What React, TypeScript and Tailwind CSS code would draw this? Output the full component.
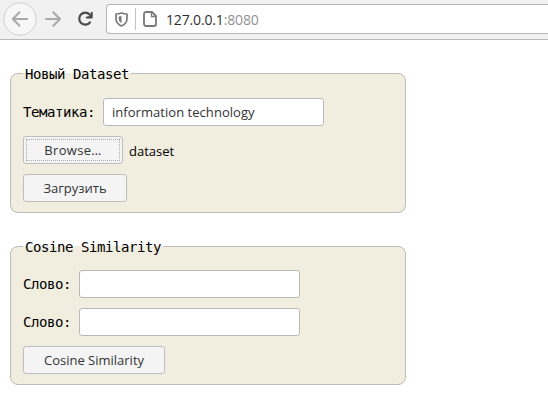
import type { ReactNode } from 'react';

const sans = "font-['Open_Sans','Noto_Sans',sans-serif]";
const mono = "font-['DejaVu_Sans_Mono',monospace] text-[14px] tracking-[-0.43px]";

function BrowserBar() {
  return (
    <header className="flex h-10 items-start border-b border-[#b9b9b9] bg-[#f1f1f1] pl-[3px]">
      <svg className="mt-[2px] shrink-0" width="34" height="34" viewBox="0 0 34 34" fill="none">
        <circle cx="17" cy="17" r="16.3" fill="#f7f7f7" stroke="#cfcfcf" />
        <path d="M24.2 17H10M16.5 10.3L9.8 17l6.7 6.7" stroke="#aaaaaa" strokeWidth="2" strokeLinecap="round" strokeLinejoin="round" />
      </svg>
      <svg className="mt-[11px] ml-2 shrink-0" width="16" height="16" viewBox="0 0 16 16" fill="none">
        <path d="M1 8h14M8.3 1.3L15 8l-6.7 6.7" stroke="#aaaaaa" strokeWidth="2" strokeLinecap="round" strokeLinejoin="round" />
      </svg>
      <svg className="mt-[11px] ml-4 shrink-0" width="17" height="16" viewBox="0 0 17 16" fill="none">
        <path d="M12.6 3.5A6 6 0 1 0 13 11.3" stroke="#4a4a4a" strokeWidth="2.2" strokeLinecap="round" />
        <path d="M14.7 1.800v4.800H9.800" stroke="#4a4a4a" strokeWidth="2" strokeLinecap="round" strokeLinejoin="round" />
        <path d="M14.500 2.500v4h-4z" fill="#4a4a4a" />
      </svg>
      <div className="mt-1 ml-3 flex h-[30px] min-w-0 flex-1 items-center rounded-l-[4px] border border-r-0 border-[#b5b5b5] bg-white pl-2">
        <svg className="shrink-0" width="13" height="15" viewBox="0 0 13 15" fill="none">
          <path d="M6.5 1C4.8 1.7 3 2 1 2v4.5c0 3.700 2 6 5.500 7.500C10 12.500 12 10.200 12 6.500V2c-2 0-3.800-.3-5.500-1z" stroke="#797979" strokeWidth="1.700" strokeLinejoin="round" />
          <path d="M6.500 4v7.200C4.600 10 3.700 8.500 3.700 6.500V4.500c1 0 1.900-.2 2.800-.5z" fill="#797979" />
        </svg>
        <span className="ml-[7px] h-[22px] w-px bg-[#c2c2c2]" />
        <svg className="ml-[7px] shrink-0" width="14" height="16" viewBox="0 0 14 16" fill="none">
          <path d="M3 1h6l4 4v8a2 2 0 0 1-2 2H3a2 2 0 0 1-2-2V3a2 2 0 0 1 2-2z" stroke="#797979" strokeWidth="1.800" strokeLinejoin="round" />
          <path d="M8.500 1.500v4h4" stroke="#797979" strokeWidth="1.300" />
        </svg>
        <span className={`${sans} ml-[9px] pt-[2px] text-[14px] leading-5 tracking-[-0.15px] text-[#303030]`}>
          127.0.0.1<span className="text-[#929292]">:8080</span>
        </span>
      </div>
    </header>
  );
}

function Panel({ title, className, children }: { title: string; className: string; children: ReactNode }) {
  return (
    <fieldset className={`w-[396px] rounded-[8px] border border-[#bdbdbd] bg-[#f1eee0] px-3 pb-[10px] ${className}`}>
      <legend className={`${mono} h-[17px] px-[2px] leading-[19px] whitespace-pre`}>{title}</legend>
      <div className="flex flex-col items-start gap-[10px]">{children}</div>
    </fieldset>
  );
}

function Field({ label, value }: { label: string; value?: string }) {
  return (
    <label className="flex items-center gap-2">
      <span className={`${mono} leading-[17px]`}>{label}</span>
      <input
        className={`${sans} h-7 w-[221px] rounded-[3px] border border-[#b8b8b8] bg-white px-2 text-[13px] tracking-[0.04px] text-[#333333]`}
        defaultValue={value}
      />
    </label>
  );
}

const button = `${sans} h-7 rounded-[3px] border border-[#bdbdbd] bg-[#f4f4f5] text-[13px] leading-5 whitespace-nowrap text-[#333333]`;

export default function App() {
  return (
    <div className="min-h-screen bg-white text-black">
      <BrowserBar />
      <main className="flex flex-col items-start gap-[25px] pt-[25px] pl-[10px]">
        <Panel title="Новый Dataset" className="pt-4">
          <Field label="Тематика:" value="information technology" />
          <div className="flex items-center gap-[6px]">
            <button className={`${button} w-[100px] p-[2px]`}>
              <span className="flex h-full items-center justify-center border border-dotted border-[#aaaaaa] tracking-[0.3px]">Browse…</span>
            </button>
            <span className={`${sans} pt-[2px] text-[13px] leading-5`}>dataset</span>
          </div>
          <button className={`${button} w-[104px]`}>Загрузить</button>
        </Panel>
        <Panel title="Cosine Similarity" className="pt-[15px]">
          <Field label="Слово:" />
          <Field label="Слово:" />
          <button className={`${button} w-[142px]`}>Cosine Similarity</button>
        </Panel>
      </main>
    </div>
  );
}
